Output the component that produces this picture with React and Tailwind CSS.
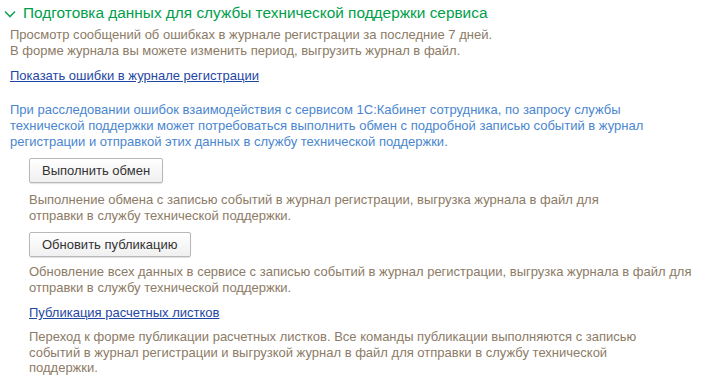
const hint = "text-[#8c7b66]";

function Note({ children, className = "" }) {
    return <p className={`${hint} leading-[15.5px] ${className}`}>{children}</p>
}

function Btn({ children }) {
    return (
        <button className="h-[25px] px-[12px] rounded-[2px] border border-[#b8b8b8] bg-gradient-to-b from-white to-[#f0f0f0] text-[#333] text-[13px] shadow-[0_1px_1px_rgba(0,0,0,0.12)]">
            {children}
        </button>
    )
}

export default function App() {
    return (
        <div className="w-[709px] h-[383px] bg-white overflow-hidden text-[13px] font-['Liberation_Sans',Arial,sans-serif]">
            <div className="flex items-center gap-[7px] pl-[4px] pt-[4px] h-[22px]">
                <svg width="12" height="8" viewBox="0 0 12 8" className="mt-[2px]">
                    <path d="M1 1.5 L6 6.5 L11 1.5" fill="none" stroke="#1aa35a" strokeWidth="1.6" />
                </svg>
                <span className="text-[15.4px] text-[#00a04b] leading-[20px]">Подготовка данных для службы технической поддержки сервиса</span>
            </div>
            <div className="pl-[10px]">
                <Note className="mt-[5px]">
                    Просмотр сообщений об ошибках в журнале регистрации за последние 7 дней.<br />
                    В форме журнала вы можете изменить период, выгрузить журнал в файл.
                </Note>
                <a href="#" className="block mt-[10px] text-[#1f47a3] underline leading-[16px]">Показать ошибки в журнале регистрации</a>
                <p className="mt-[18px] text-[#4a86cf] leading-[16px] pr-[20px]">
                    При расследовании ошибок взаимодействия с сервисом 1С:Кабинет сотрудника, по запросу службы<br />
                    технической поддержки может потребоваться выполнить обмен с подробной записью событий в журнал<br />
                    регистрации и отправкой этих данных в службу технической поддержки.
                </p>
                <div className="pl-[19px] mt-[8px] flex flex-col items-start">
                    <Btn>Выполнить обмен</Btn>
                    <Note className="mt-[9px]">
                        Выполнение обмена с записью событий в журнал регистрации, выгрузка журнала в файл для<br />
                        отправки в службу технической поддержки.
                    </Note>
                    <div className="mt-[9px]"><Btn>Обновить публикацию</Btn></div>
                    <Note className="mt-[7px]">
                        Обновление всех данных в сервисе с записью событий в журнал регистрации, выгрузка журнала в файл для<br />
                        отправки в службу технической поддержки.
                    </Note>
                    <a href="#" className="block mt-[10px] text-[#1f47a3] underline leading-[16px]">Публикация расчетных листков</a>
                    <Note className="mt-[8px]">
                        Переход к форме публикации расчетных листков. Все команды публикации выполняются с записью<br />
                        событий в журнал регистрации и выгрузкой журнал в файл для отправки в службу технической<br />
                        поддержки.
                    </Note>
                </div>
            </div>
        </div>
    )
}
